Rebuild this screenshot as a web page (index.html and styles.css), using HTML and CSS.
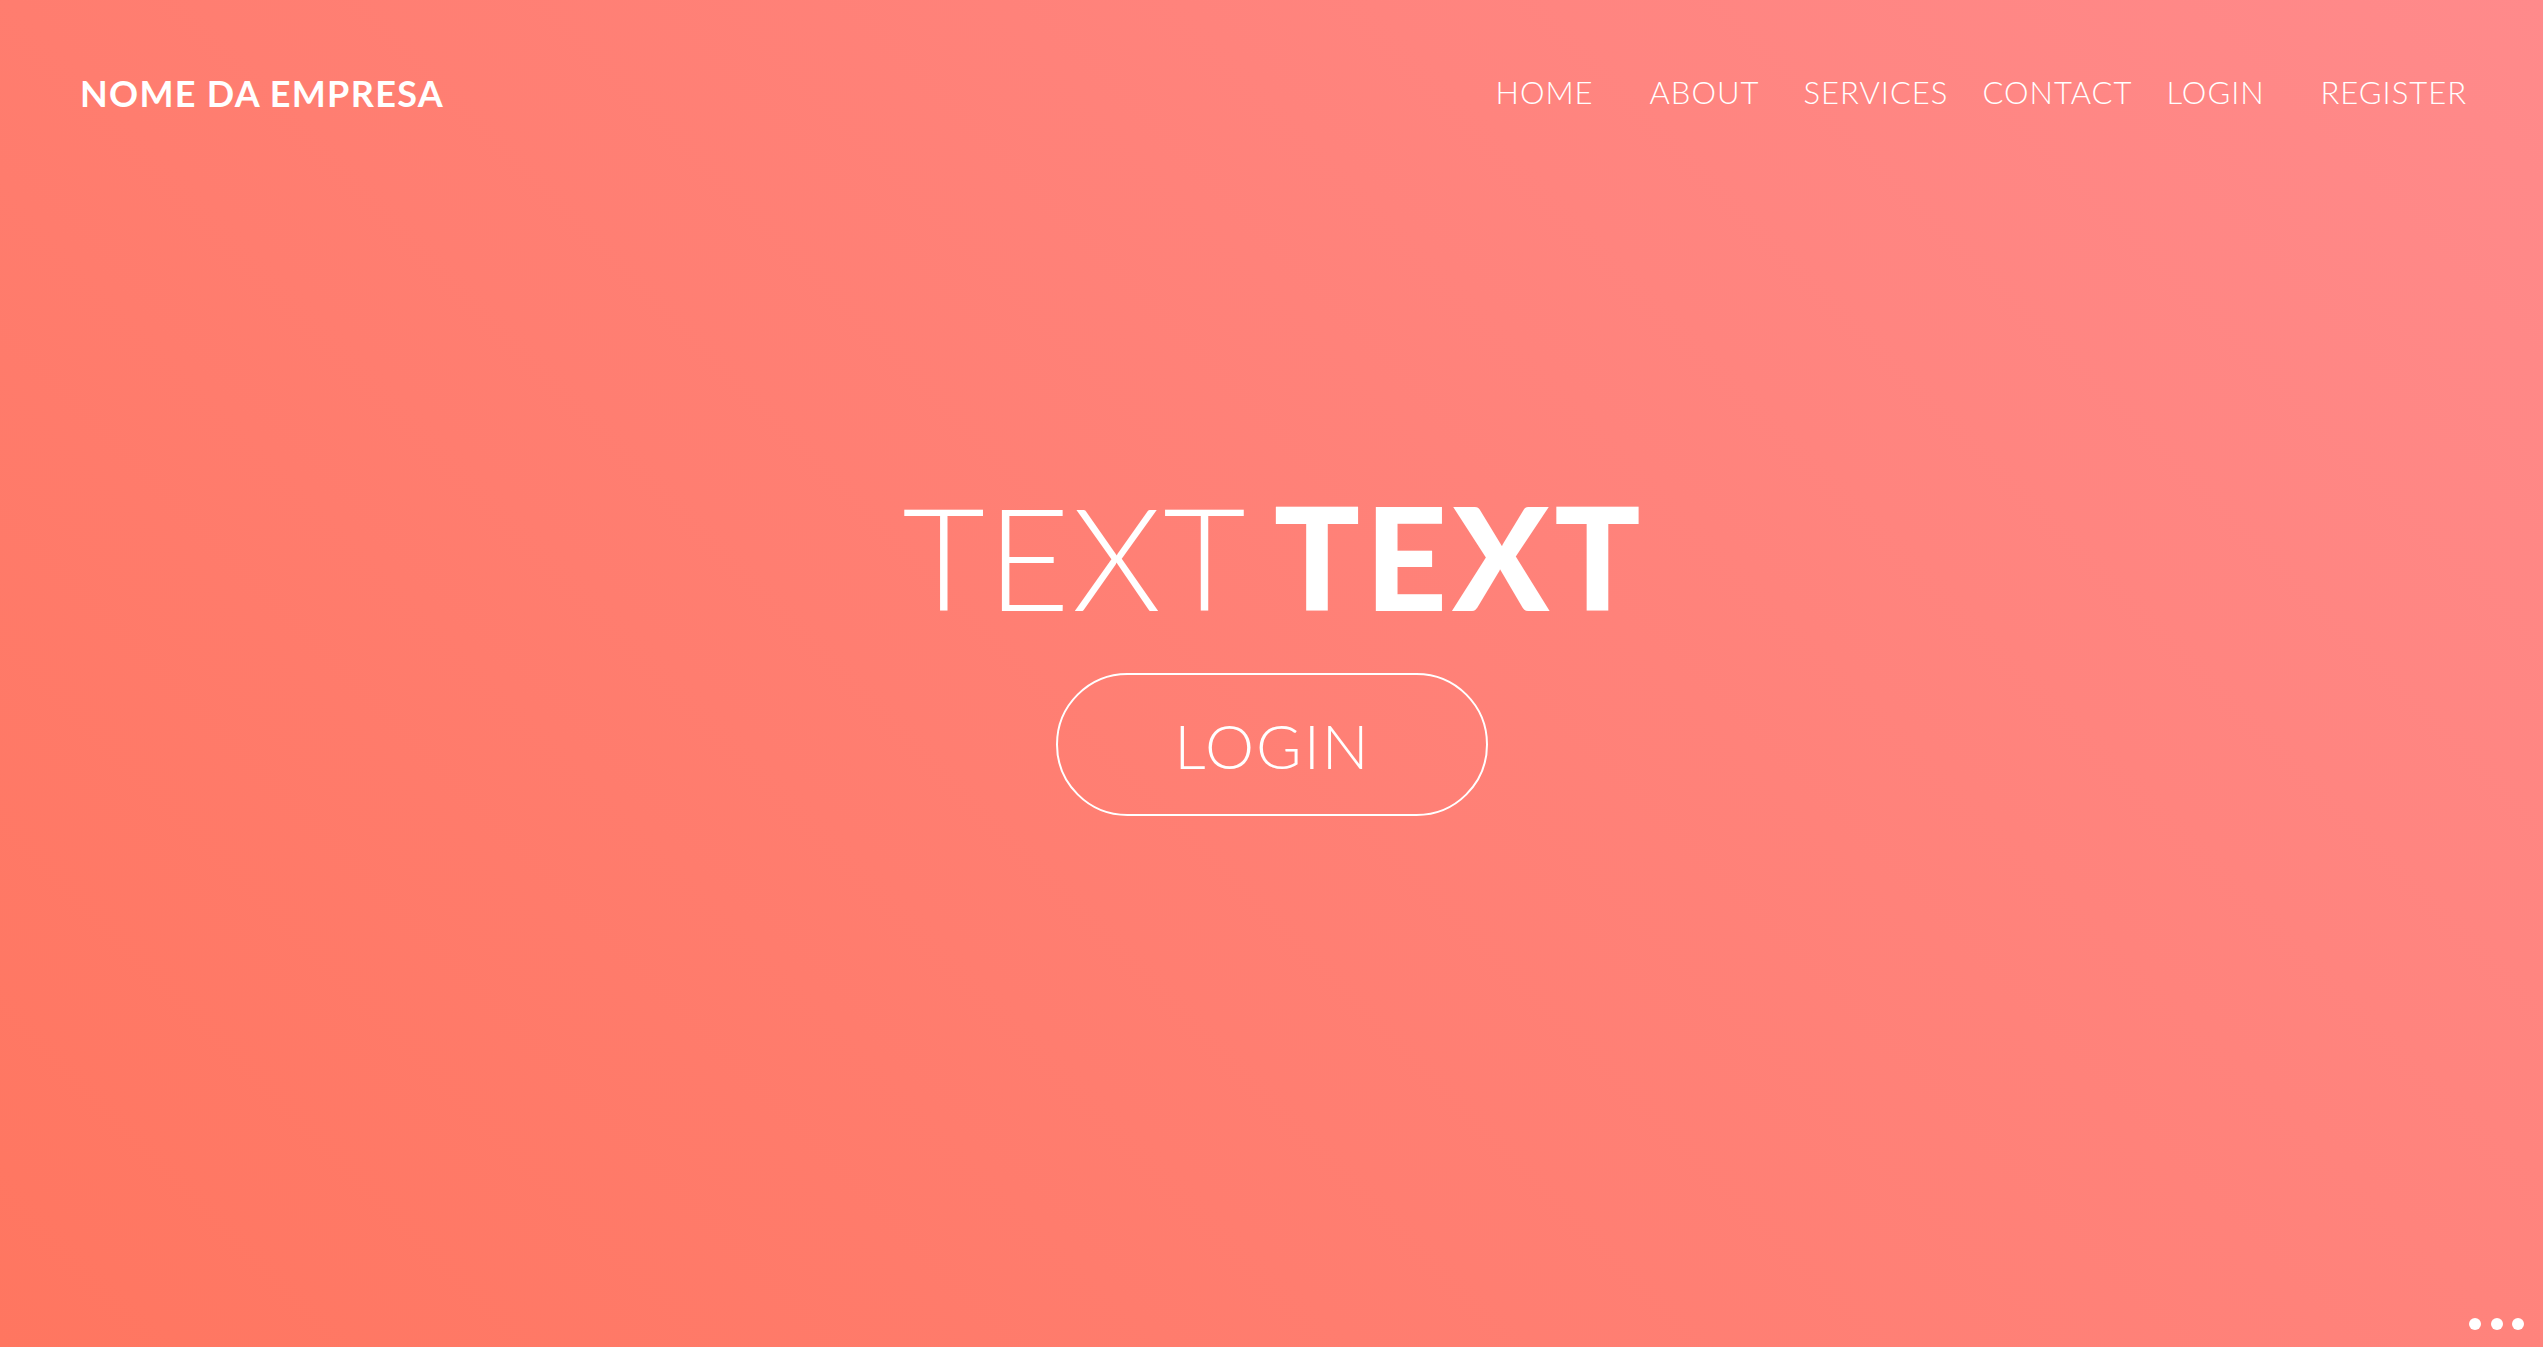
FILE: index.html
```html
<!DOCTYPE html>
<html lang="pt">
<head>
<meta charset="utf-8">
<title>Nome da Empresa</title>
<link rel="stylesheet" href="styles.css">
</head>
<body>
<div class="page">
  <header class="header">
    <div class="brand">NOME DA EMPRESA</div>
    <nav class="nav">
      <a class="nav-item" href="#">HOME</a>
      <a class="nav-item" href="#">ABOUT</a>
      <a class="nav-item" href="#">SERVICES</a>
      <a class="nav-item" href="#">CONTACT</a>
      <a class="nav-item" href="#">LOGIN</a>
      <a class="nav-item nav-last" href="#">REGISTER</a>
    </nav>
  </header>
  <main class="hero">
    <h1 class="title"><span class="thin">TEXT</span> <span class="heavy">TEXT</span></h1>
    <a class="btn" href="#">LOGIN</a>
  </main>
  <footer class="footer">
    <div class="dots"><span class="dot"></span><span class="dot"></span><span class="dot"></span></div>
  </footer>
</div>
</body>
</html>
```
FILE: styles.css
```css
html, body {
  margin: 0;
  padding: 0;
  height: 100%;
}
body {
  font-family: "Lato", "Liberation Sans", sans-serif;
  color: #fff;
  background: linear-gradient(45deg, #ff7660 0%, #ff8a8b 100%);
  overflow: hidden;
}
.page {
  height: 100vh;
  display: flex;
  flex-direction: column;
}
.header {
  display: flex;
  justify-content: space-between;
  align-items: center;
  padding: 64px 76px 0 80px;
  height: 56px;
}
.brand {
  font-weight: 700;
  font-size: 36px;
  letter-spacing: 1.3px;
  line-height: 1;
  margin-top: 2px;
}
.nav {
  display: flex;
  align-items: center;
}
.nav-item {
  color: #fff;
  text-decoration: none;
  font-weight: 300;
  font-size: 31px;
  letter-spacing: 1px;
  line-height: 1;
  min-width: 120px;
  padding-right: 34px;
}
.nav-last {
  min-width: 0;
  padding-right: 0;
}
.hero {
  flex: 1;
  display: flex;
  flex-direction: column;
  align-items: center;
  justify-content: center;
  padding-bottom: 138px;
}
.title {
  margin: 0;
  font-size: 143px;
  line-height: 1;
  font-weight: 300;
  white-space: nowrap;
  word-spacing: -13px;
}
.thin { font-weight: 300; letter-spacing: 2px; }
.heavy { font-weight: 900; letter-spacing: 5px; margin-right: -5px; }
.btn {
  margin-top: 46px;
  width: 428px;
  height: 139px;
  border: 2px solid #fff;
  border-radius: 72px;
  display: flex;
  align-items: center;
  justify-content: center;
  color: #fff;
  text-decoration: none;
  font-size: 62px;
  font-weight: 300;
  letter-spacing: 2px;
  text-indent: 2px;
}
.footer {
  display: flex;
  justify-content: flex-end;
  padding: 0 19px 17px 0;
}
.dots {
  display: flex;
  gap: 9.5px;
}
.dot {
  width: 12px;
  height: 12px;
  border-radius: 50%;
  background: #fff;
}
```
